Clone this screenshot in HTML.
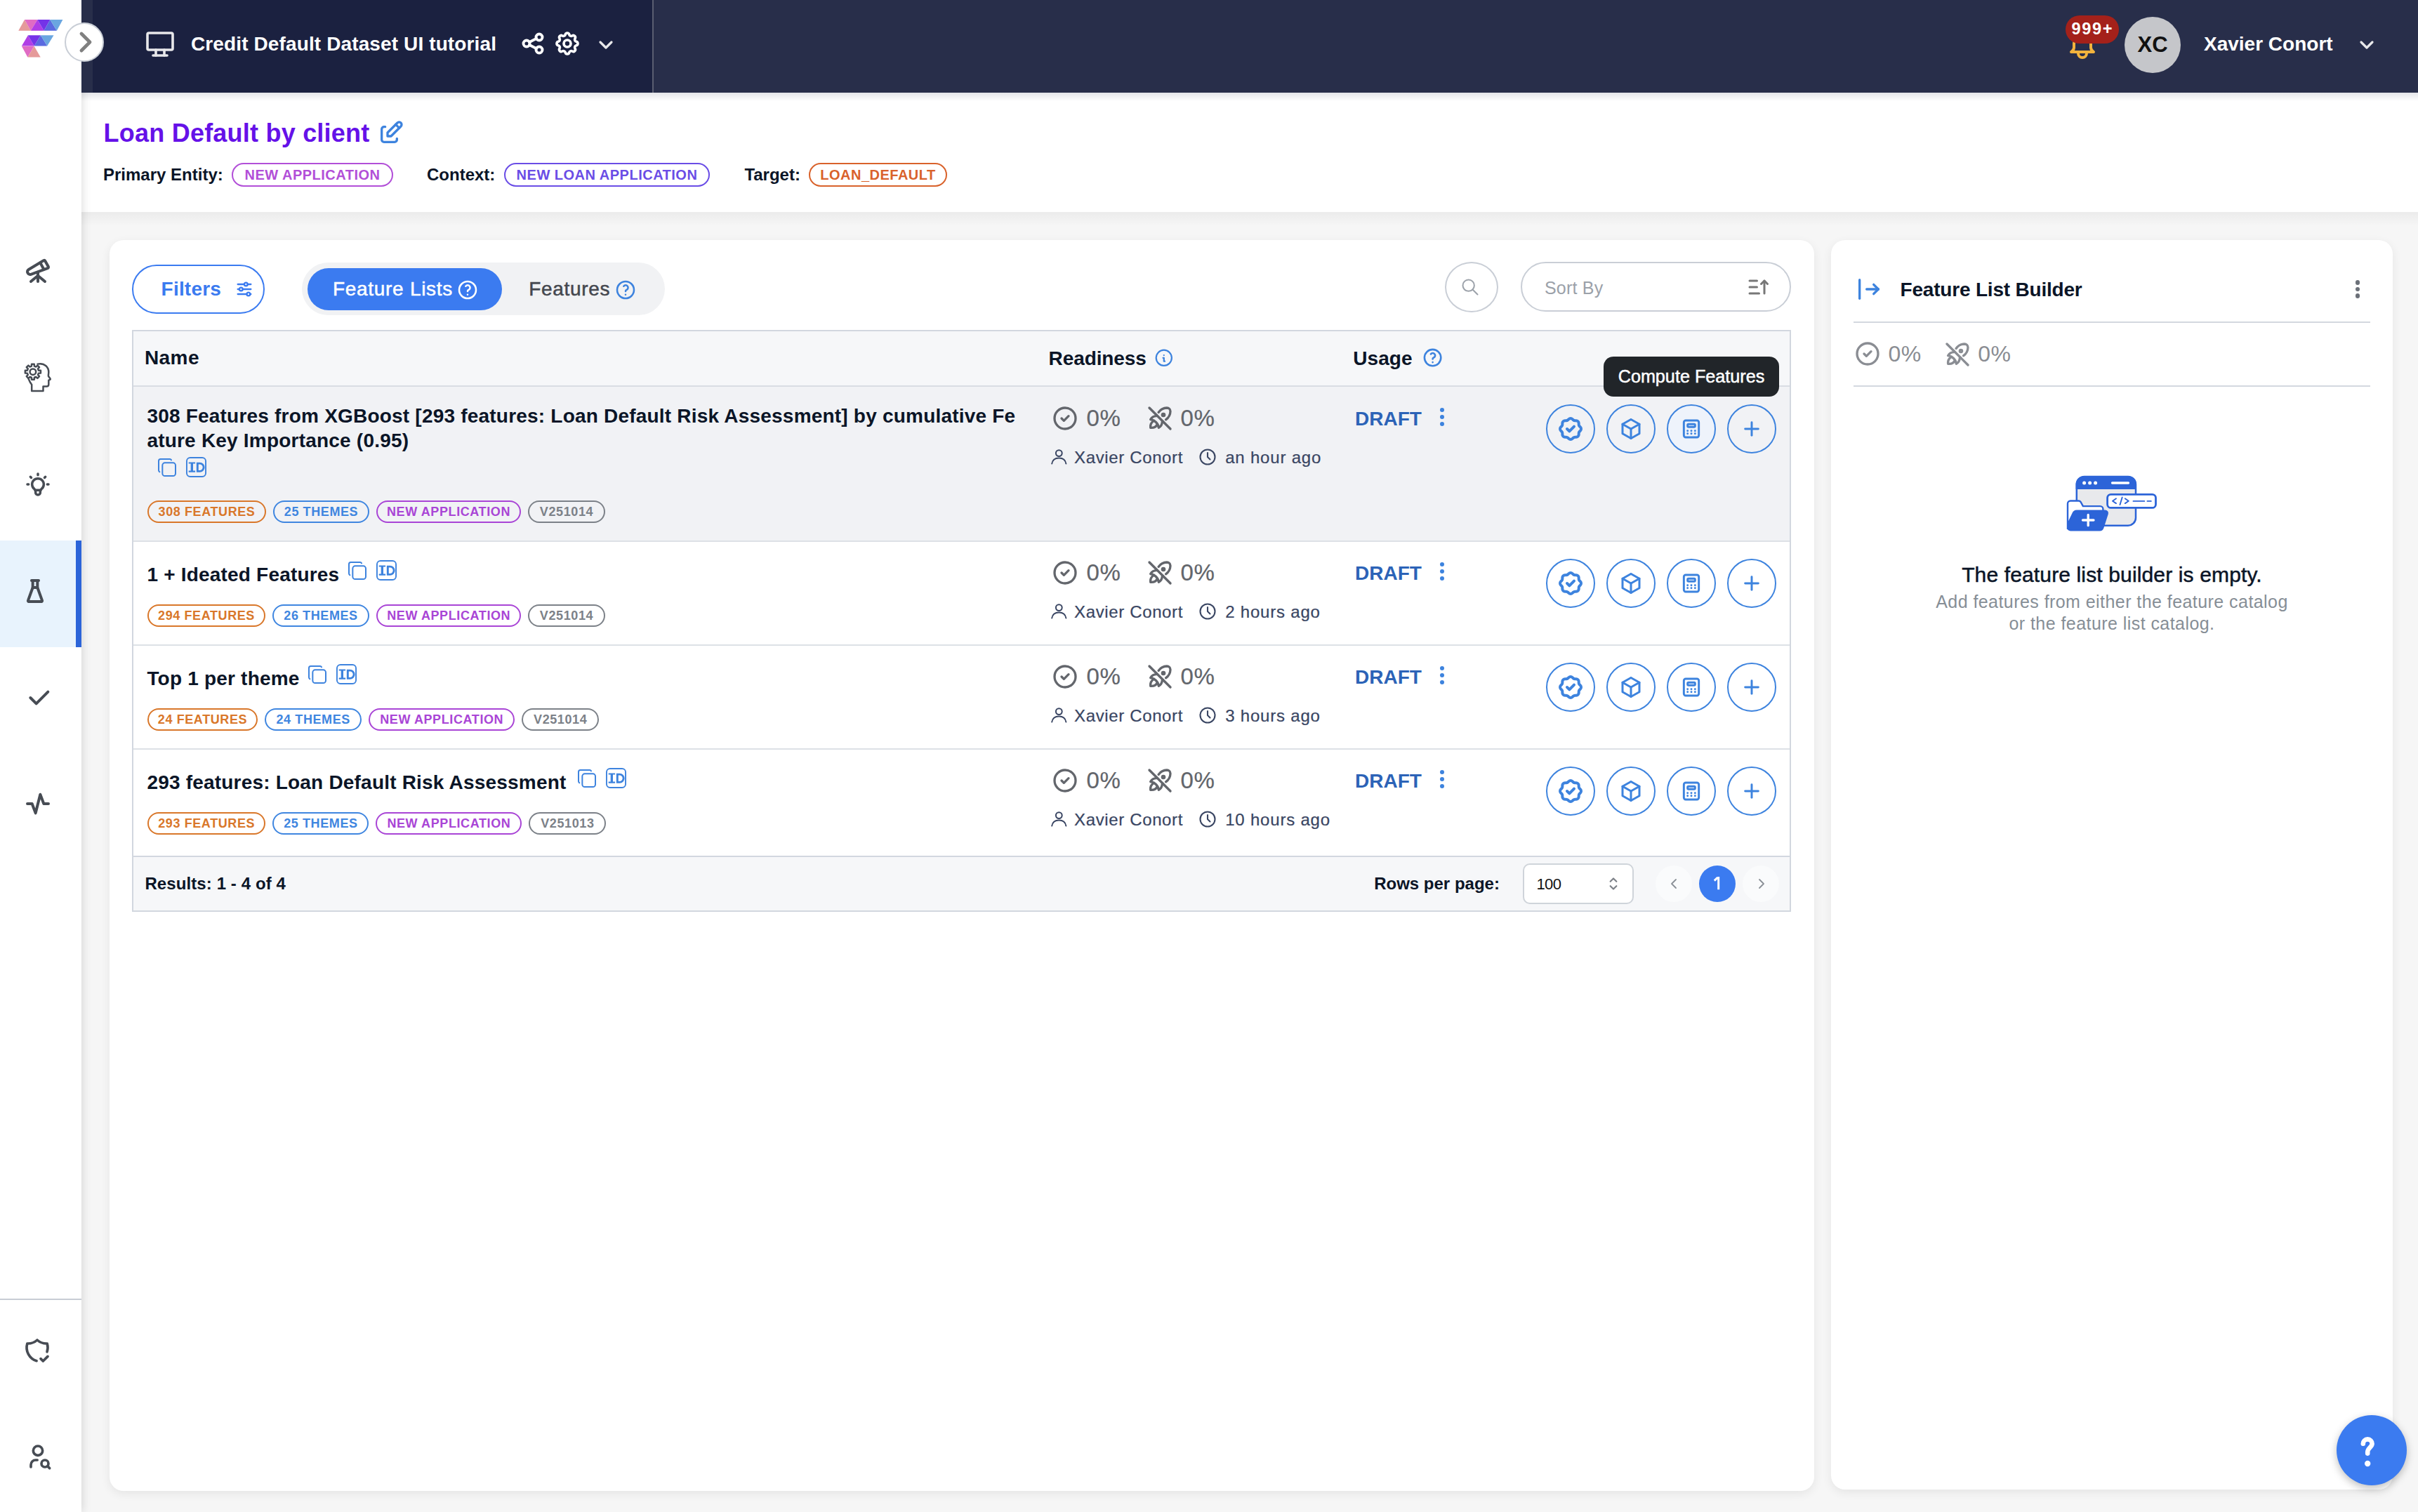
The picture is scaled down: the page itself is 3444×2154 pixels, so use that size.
<!DOCTYPE html>
<html><head><meta charset="utf-8"><title>Feature Lists</title>
<style>
html,body{margin:0;padding:0;background:#f4f4f5;overflow:hidden}
#root{zoom:2;position:relative;width:1722px;height:1077px;overflow:hidden;font-family:"Liberation Sans", sans-serif;background:#f6f6f6}
.t{position:absolute;white-space:nowrap;font-family:"Liberation Sans", sans-serif}
.m{-webkit-text-stroke:0.25px currentColor}
.s{-webkit-text-stroke:0.12px currentColor}
@media (max-width:2000px){#root{zoom:1}}
.tag{position:absolute;box-sizing:border-box;height:16px;border:1px solid;border-radius:8px;font-size:9px;font-weight:700;letter-spacing:0.3px;text-align:center;line-height:14px;font-family:"Liberation Sans", sans-serif;white-space:nowrap}
svg{overflow:visible}
</style></head><body><div id="root">
<div style="position:absolute;left:58px;top:151px;width:1664px;height:926px;background:#f6f6f6"></div><div style="position:absolute;left:58px;top:151px;width:1664px;height:10px;background:linear-gradient(rgba(0,0,0,0.045),rgba(0,0,0,0))"></div><div style="position:absolute;left:58px;top:66px;width:1664px;height:85px;background:#fff"></div><div style="position:absolute;left:58px;top:66px;width:1664px;height:6px;background:linear-gradient(#e4e5e9,#fff)"></div><div style="position:absolute;left:78px;top:171px;width:1214px;height:891px;background:#fff;border-radius:10px;box-shadow:0 2px 7px rgba(0,0,0,0.075)"></div><div style="position:absolute;left:1304px;top:171px;width:400px;height:890px;background:#fff;border-radius:10px;box-shadow:0 2px 7px rgba(0,0,0,0.075)"></div><div class="t" style="left:73.8px;top:85.76px;font-size:18px;line-height:18px;font-weight:700;color:#6511e8;letter-spacing:0.11px;">Loan Default by client</div><svg style="position:absolute;left:268.5px;top:84.3px;" width="20" height="20" viewBox="0 0 24 24" fill="none" stroke="#3d83de" stroke-width="2" stroke-linecap="round" stroke-linejoin="round"><path d="M7 7h-1a2 2 0 0 0 -2 2v9a2 2 0 0 0 2 2h9a2 2 0 0 0 2 -2v-1"/><path d="M20.385 6.585a2.1 2.1 0 0 0 -2.97 -2.97l-8.415 8.385v3h3l8.385 -8.415z"/><path d="M16 5l3 3"/></svg><div class="t" style="left:73.5px;top:118.44px;font-size:12px;line-height:12px;font-weight:700;color:#0b1527;letter-spacing:0px;">Primary Entity:</div><div class="tag" style="left:165px;top:115.8px;width:115px;height:17.4px;border-radius:9px;border-color:#b24fd8;color:#b24fd8;font-size:10px;line-height:15.4px;letter-spacing:0.25px">NEW APPLICATION</div><div class="t" style="left:304px;top:118.44px;font-size:12px;line-height:12px;font-weight:700;color:#0b1527;letter-spacing:0px;">Context:</div><div class="tag" style="left:359px;top:115.8px;width:146.5px;height:17.4px;border-radius:9px;border-color:#6a4de6;color:#6a4de6;font-size:10px;line-height:15.4px;letter-spacing:0.25px">NEW LOAN APPLICATION</div><div class="t" style="left:530.2px;top:118.44px;font-size:12px;line-height:12px;font-weight:700;color:#0b1527;letter-spacing:0px;">Target:</div><div class="tag" style="left:576px;top:115.8px;width:98.5px;height:17.4px;border-radius:9px;border-color:#d9622b;color:#d9622b;font-size:10px;line-height:15.4px;letter-spacing:0.25px">LOAN_DEFAULT</div><div style="position:absolute;left:94.2px;top:188.6px;width:92.4px;height:32.8px;border:1px solid #3b7bf0;border-radius:18px"></div><div class="t" style="left:114.8px;top:199.15px;font-size:14px;line-height:14px;font-weight:700;color:#3b7bf0;letter-spacing:0.1px;">Filters</div><svg style="position:absolute;left:167px;top:199px;" width="14" height="14" viewBox="0 0 24 24" fill="none" stroke="#3b7bf0" stroke-width="2" stroke-linecap="round" stroke-linejoin="round"><path d="M12 6a2 2 0 1 0 4 0a2 2 0 1 0 -4 0"/><path d="M4 6l8 0"/><path d="M16 6l4 0"/><path d="M6 12a2 2 0 1 0 4 0a2 2 0 1 0 -4 0"/><path d="M4 12l2 0"/><path d="M10 12l10 0"/><path d="M15 18a2 2 0 1 0 4 0a2 2 0 1 0 -4 0"/><path d="M4 18l11 0"/><path d="M19 18l1 0"/></svg><div style="position:absolute;left:215px;top:187px;width:258.5px;height:37.5px;background:#f1f2f4;border-radius:19px"></div><div style="position:absolute;left:219px;top:191px;width:138.5px;height:30px;background:#3b7bf0;border-radius:15px"></div><div class="t m" style="left:237px;top:198.85px;font-size:14px;line-height:14px;font-weight:400;color:#ffffff;letter-spacing:0.35px;">Feature Lists</div><svg style="position:absolute;left:325.2px;top:198.3px;" width="16" height="16" viewBox="0 0 24 24" fill="none" stroke="#ffffff" stroke-width="1.9" stroke-linecap="round" stroke-linejoin="round"><path d="M3 12a9 9 0 1 0 18 0a9 9 0 1 0 -18 0"/><path d="M12 17l0 .01"/><path d="M12 13.5a1.5 1.5 0 0 1 1 -1.5a2.6 2.6 0 1 0 -3 -4"/></svg><div class="t m" style="left:376.6px;top:198.85px;font-size:14px;line-height:14px;font-weight:400;color:#44474e;letter-spacing:0.35px;">Features</div><svg style="position:absolute;left:437.7px;top:198.3px;" width="16" height="16" viewBox="0 0 24 24" fill="none" stroke="#3d83de" stroke-width="1.9" stroke-linecap="round" stroke-linejoin="round"><path d="M3 12a9 9 0 1 0 18 0a9 9 0 1 0 -18 0"/><path d="M12 17l0 .01"/><path d="M12 13.5a1.5 1.5 0 0 1 1 -1.5a2.6 2.6 0 1 0 -3 -4"/></svg><div style="position:absolute;left:1029px;top:186.4px;width:36px;height:34px;border:1px solid #c9ced6;border-radius:50%"></div><svg style="position:absolute;left:1040px;top:197.4px;" width="14" height="14" viewBox="0 0 24 24" fill="none" stroke="#9ca2aa" stroke-width="1.75" stroke-linecap="round" stroke-linejoin="round"><path d="M3 10a7 7 0 1 0 14 0a7 7 0 1 0 -14 0"/><path d="M21 21l-6 -6"/></svg><div style="position:absolute;left:1083px;top:186.5px;width:190.5px;height:33.5px;border:1px solid #c9ced6;border-radius:18px"></div><div class="t" style="left:1100px;top:198.92px;font-size:12.5px;line-height:12.5px;font-weight:400;color:#9ba1a9;letter-spacing:0.1px;">Sort By</div><svg style="position:absolute;left:1242.75px;top:195.25px;" width="18" height="18" viewBox="0 0 24 24" fill="none" stroke="#777777" stroke-width="2" stroke-linecap="round" stroke-linejoin="round"><path d="M4 6l7 0"/><path d="M4 12l7 0"/><path d="M4 18l9 0"/><path d="M15 9l3 -3l3 3"/><path d="M18 6l0 12"/></svg><div style="position:absolute;left:94px;top:235px;width:1181.5px;height:1px;background:#d2d7df"></div><div style="position:absolute;left:95px;top:236px;width:1179.5px;height:38.5px;background:#f6f7f9"></div><div style="position:absolute;left:94px;top:274.5px;width:1181.5px;height:1px;background:#d9dde3"></div><div style="position:absolute;left:94px;top:235px;width:1px;height:414.5px;background:#d2d7df"></div><div style="position:absolute;left:1274.5px;top:235px;width:1px;height:414.5px;background:#d2d7df"></div><div class="t" style="left:103px;top:248.15px;font-size:14px;line-height:14px;font-weight:700;color:#0b1527;letter-spacing:0.2px;">Name</div><div class="t" style="left:746.8px;top:248.25px;font-size:14px;line-height:14px;font-weight:700;color:#0b1527;letter-spacing:-0.05px;">Readiness</div><svg style="position:absolute;left:821.6px;top:247.6px;" width="14.8" height="14.8" viewBox="0 0 24 24" fill="none" stroke="#3d83de" stroke-width="1.8" stroke-linecap="round" stroke-linejoin="round"><path d="M3 12a9 9 0 1 0 18 0a9 9 0 0 0 -18 0"/><path d="M12 9h.01"/><path d="M11 12h1v4h1"/></svg><div class="t" style="left:963.6px;top:248.25px;font-size:14px;line-height:14px;font-weight:700;color:#0b1527;letter-spacing:0.05px;">Usage</div><svg style="position:absolute;left:1012.7px;top:247.1px;" width="15.6" height="15.6" viewBox="0 0 24 24" fill="none" stroke="#3d83de" stroke-width="2" stroke-linecap="round" stroke-linejoin="round"><path d="M3 12a9 9 0 1 0 18 0a9 9 0 1 0 -18 0"/><path d="M12 17l0 .01"/><path d="M12 13.5a1.5 1.5 0 0 1 1 -1.5a2.6 2.6 0 1 0 -3 -4"/></svg><div style="position:absolute;left:95px;top:275.5px;width:1179.5px;height:109.5px;background:#f1f2f5"></div><div class="t" style="left:104.7px;top:289.65px;font-size:14px;line-height:14px;font-weight:700;color:#0b1527;letter-spacing:0.104px;">308 Features from XGBoost [293 features: Loan Default Risk Assessment] by cumulative Fe</div><div class="t" style="left:104.7px;top:307.15px;font-size:14px;line-height:14px;font-weight:700;color:#0b1527;letter-spacing:0.104px;">ature Key Importance (0.95)</div><svg style="position:absolute;left:111px;top:325px;" width="16" height="16" viewBox="0 0 24 24" fill="none" stroke="#3d83de" stroke-width="1.5" stroke-linecap="round" stroke-linejoin="round"><path d="M7 9.667a2.667 2.667 0 0 1 2.667 -2.667h8.666a2.667 2.667 0 0 1 2.667 2.667v8.666a2.667 2.667 0 0 1 -2.667 2.667h-8.666a2.667 2.667 0 0 1 -2.667 -2.667z"/><path d="M4.012 16.737a2.005 2.005 0 0 1 -1.012 -1.737v-10c0 -1.1 .9 -2 2 -2h10c.75 0 1.158 .385 1.5 1"/></svg><svg style="position:absolute;left:132.5px;top:325.5px" width="14.5" height="14.5" viewBox="0 0 29 29"><rect x="0.95" y="0.95" width="27.1" height="27.1" rx="5" fill="none" stroke="#3d83de" stroke-width="1.9"/><path d="M3.7 7.6h9.4v2h-3.1v9.8h3.1v2.3h-9.4v-2.3h3v-9.8h-3z" fill="#3d83de"/><path d="M16.3 9.1h3.2a5.1 5.1 0 0 1 0 11.3h-3.2z" fill="none" stroke="#3d83de" stroke-width="2.9"/></svg><div class="tag" style="left:105px;top:356.5px;width:84.5px;border-color:#d9772a;color:#d9772a">308 FEATURES</div><div class="tag" style="left:194.5px;top:356.5px;width:68.5px;border-color:#3f86e0;color:#3f86e0">25 THEMES</div><div class="tag" style="left:268.0px;top:356.5px;width:103px;border-color:#a945d6;color:#a945d6">NEW APPLICATION</div><div class="tag" style="left:376.0px;top:356.5px;width:55px;border-color:#7c8188;color:#7c8188">V251014</div><svg style="position:absolute;left:748.3px;top:287.8px;" width="20" height="20" viewBox="0 0 24 24" fill="none" stroke="#63666c" stroke-width="2" stroke-linecap="round" stroke-linejoin="round"><path d="M3 12a9 9 0 1 0 18 0a9 9 0 1 0 -18 0"/><path d="M9 12l2 2l4 -4"/></svg><div class="t s" style="left:773.8px;top:289.33px;font-size:16.5px;line-height:16.5px;font-weight:400;color:#63666c;letter-spacing:0.3px;">0%</div><svg style="position:absolute;left:815.8px;top:287.9px;" width="20" height="20" viewBox="0 0 24 24" fill="none" stroke="#63666c" stroke-width="2" stroke-linecap="round" stroke-linejoin="round"><path d="M9.29 9.275a9.03 9.03 0 0 0 -.29 .725a6 6 0 0 0 -5 3a8 8 0 0 1 7 7a6 6 0 0 0 3 -5c.241 -.085 .478 -.18 .708 -.283m2.428 -1.61a9 9 0 0 0 3.864 -7.107a3 3 0 0 0 -3 -3a9 9 0 0 0 -7.14 3.89"/><path d="M7 14a6 6 0 0 0 -3 6a6 6 0 0 0 6 -3"/><path d="M14 9a1 1 0 1 0 2 0a1 1 0 1 0 -2 0"/><path d="M3 3l18 18"/></svg><div class="t s" style="left:840.8px;top:289.33px;font-size:16.5px;line-height:16.5px;font-weight:400;color:#63666c;letter-spacing:0.3px;">0%</div><svg style="position:absolute;left:748.3px;top:319.9px" width="11.3" height="10.8" viewBox="0 0 22.6 21.6" fill="none" stroke="#3a4663" stroke-width="2" stroke-linecap="round"><circle cx="11.3" cy="5.6" r="4.4"/><path d="M1.2 20.6C2.2 15 6 12.6 11.3 12.6S20.4 15 21.4 20.6"/></svg><div class="t s" style="left:765px;top:319.94px;font-size:12px;line-height:12px;font-weight:400;color:#3a4663;letter-spacing:0.32px;">Xavier Conort</div><svg style="position:absolute;left:852.8px;top:318.5px;" width="14" height="14" viewBox="0 0 24 24" fill="none" stroke="#3a4663" stroke-width="1.8" stroke-linecap="round" stroke-linejoin="round"><path d="M3 12a9 9 0 1 0 18 0a9 9 0 0 0 -18 0"/><path d="M12 7v5l3 3"/></svg><div class="t s" style="left:872.6px;top:319.94px;font-size:12px;line-height:12px;font-weight:400;color:#3a4663;letter-spacing:0.4px;">an hour ago</div><div class="t" style="left:965px;top:291.65px;font-size:14px;line-height:14px;font-weight:700;color:#2c63b7;letter-spacing:0px;">DRAFT</div><div style="position:absolute;left:1025.35px;top:290.45000000000005px;width:3.3px;height:3.3px;border-radius:2px;background:#3d83de"></div><div style="position:absolute;left:1025.35px;top:295.35px;width:3.3px;height:3.3px;border-radius:2px;background:#3d83de"></div><div style="position:absolute;left:1025.35px;top:300.25px;width:3.3px;height:3.3px;border-radius:2px;background:#3d83de"></div><div style="position:absolute;left:1101.0px;top:287.75px;width:33px;height:33px;border:1px solid #3d83de;border-radius:18px;background:transparent"></div><svg style="position:absolute;left:1108.5px;top:295.25px;" width="20" height="20" viewBox="0 0 24 24" fill="none" stroke="#3d83de" stroke-width="2.4" stroke-linecap="round" stroke-linejoin="round"><path d="M5 7.2a2.2 2.2 0 0 1 2.2 -2.2h1a2.2 2.2 0 0 0 1.55 -.64l.7 -.7a2.2 2.2 0 0 1 3.12 0l.7 .7c.412 .41 .97 .64 1.55 .64h1a2.2 2.2 0 0 1 2.2 2.2v1c0 .58 .23 1.138 .64 1.55l.7 .7a2.2 2.2 0 0 1 0 3.12l-.7 .7a2.2 2.2 0 0 0 -.64 1.55v1a2.2 2.2 0 0 1 -2.2 2.2h-1a2.2 2.2 0 0 0 -1.55 .64l-.7 .7a2.2 2.2 0 0 1 -3.12 0l-.7 -.7a2.2 2.2 0 0 0 -1.55 -.64h-1a2.2 2.2 0 0 1 -2.2 -2.2v-1a2.2 2.2 0 0 0 -.64 -1.55l-.7 -.7a2.2 2.2 0 0 1 0 -3.12l.7 -.7a2.2 2.2 0 0 0 .64 -1.55v-1"/><path d="M9 12l2 2l4 -4"/></svg><div style="position:absolute;left:1144.0px;top:287.75px;width:33px;height:33px;border:1px solid #3d83de;border-radius:18px;background:transparent"></div><svg style="position:absolute;left:1152.5px;top:296.25px;" width="18" height="18" viewBox="0 0 24 24" fill="none" stroke="#3d83de" stroke-width="2" stroke-linecap="round" stroke-linejoin="round"><path d="M12 3l8 4.5l0 9l-8 4.5l-8 -4.5l0 -9l8 -4.5"/><path d="M12 12l8 -4.5"/><path d="M12 12l0 9"/><path d="M12 12l-8 -4.5"/></svg><div style="position:absolute;left:1187.0px;top:287.75px;width:33px;height:33px;border:1px solid #3d83de;border-radius:18px;background:#eef3fb"></div><svg style="position:absolute;left:1196.5px;top:297.25px;" width="16" height="16" viewBox="0 0 24 24" fill="none" stroke="#3d83de" stroke-width="2.2" stroke-linecap="round" stroke-linejoin="round"><path d="M4 5a2 2 0 0 1 2 -2h12a2 2 0 0 1 2 2v14a2 2 0 0 1 -2 2h-12a2 2 0 0 1 -2 -2z"/><path d="M8 8a1 1 0 0 1 1 -1h6a1 1 0 0 1 1 1v1a1 1 0 0 1 -1 1h-6a1 1 0 0 1 -1 -1z"/><path d="M8 14l0 .01"/><path d="M12 14l0 .01"/><path d="M16 14l0 .01"/><path d="M8 17l0 .01"/><path d="M12 17l0 .01"/><path d="M16 17l0 .01"/></svg><div style="position:absolute;left:1230.0px;top:287.75px;width:33px;height:33px;border:1px solid #3d83de;border-radius:18px;background:transparent"></div><svg style="position:absolute;left:1239.5px;top:297.25px;" width="16" height="16" viewBox="0 0 24 24" fill="none" stroke="#3d83de" stroke-width="2.2" stroke-linecap="round" stroke-linejoin="round"><path d="M12 5l0 14"/><path d="M5 12l14 0"/></svg><div style="position:absolute;left:95px;top:385.0px;width:1179.5px;height:1px;background:#dde1e6"></div><div class="t" style="left:104.7px;top:402.45px;font-size:14px;line-height:14px;font-weight:700;color:#0b1527;letter-spacing:0.1px;">1 + Ideated Features</div><svg style="position:absolute;left:246.5px;top:398.3px;" width="16" height="16" viewBox="0 0 24 24" fill="none" stroke="#3d83de" stroke-width="1.5" stroke-linecap="round" stroke-linejoin="round"><path d="M7 9.667a2.667 2.667 0 0 1 2.667 -2.667h8.666a2.667 2.667 0 0 1 2.667 2.667v8.666a2.667 2.667 0 0 1 -2.667 2.667h-8.666a2.667 2.667 0 0 1 -2.667 -2.667z"/><path d="M4.012 16.737a2.005 2.005 0 0 1 -1.012 -1.737v-10c0 -1.1 .9 -2 2 -2h10c.75 0 1.158 .385 1.5 1"/></svg><svg style="position:absolute;left:268px;top:398.8px" width="14.5" height="14.5" viewBox="0 0 29 29"><rect x="0.95" y="0.95" width="27.1" height="27.1" rx="5" fill="none" stroke="#3d83de" stroke-width="1.9"/><path d="M3.7 7.6h9.4v2h-3.1v9.8h3.1v2.3h-9.4v-2.3h3v-9.8h-3z" fill="#3d83de"/><path d="M16.3 9.1h3.2a5.1 5.1 0 0 1 0 11.3h-3.2z" fill="none" stroke="#3d83de" stroke-width="2.9"/></svg><div class="tag" style="left:105px;top:430.5px;width:84px;border-color:#d9772a;color:#d9772a">294 FEATURES</div><div class="tag" style="left:194px;top:430.5px;width:69px;border-color:#3f86e0;color:#3f86e0">26 THEMES</div><div class="tag" style="left:268px;top:430.5px;width:103.2px;border-color:#a945d6;color:#a945d6">NEW APPLICATION</div><div class="tag" style="left:376.2px;top:430.5px;width:54.6px;border-color:#7c8188;color:#7c8188">V251014</div><svg style="position:absolute;left:748.3px;top:397.8px;" width="20" height="20" viewBox="0 0 24 24" fill="none" stroke="#63666c" stroke-width="2" stroke-linecap="round" stroke-linejoin="round"><path d="M3 12a9 9 0 1 0 18 0a9 9 0 1 0 -18 0"/><path d="M9 12l2 2l4 -4"/></svg><div class="t s" style="left:773.8px;top:399.33px;font-size:16.5px;line-height:16.5px;font-weight:400;color:#63666c;letter-spacing:0.3px;">0%</div><svg style="position:absolute;left:815.8px;top:397.9px;" width="20" height="20" viewBox="0 0 24 24" fill="none" stroke="#63666c" stroke-width="2" stroke-linecap="round" stroke-linejoin="round"><path d="M9.29 9.275a9.03 9.03 0 0 0 -.29 .725a6 6 0 0 0 -5 3a8 8 0 0 1 7 7a6 6 0 0 0 3 -5c.241 -.085 .478 -.18 .708 -.283m2.428 -1.61a9 9 0 0 0 3.864 -7.107a3 3 0 0 0 -3 -3a9 9 0 0 0 -7.14 3.89"/><path d="M7 14a6 6 0 0 0 -3 6a6 6 0 0 0 6 -3"/><path d="M14 9a1 1 0 1 0 2 0a1 1 0 1 0 -2 0"/><path d="M3 3l18 18"/></svg><div class="t s" style="left:840.8px;top:399.33px;font-size:16.5px;line-height:16.5px;font-weight:400;color:#63666c;letter-spacing:0.3px;">0%</div><svg style="position:absolute;left:748.3px;top:429.9px" width="11.3" height="10.8" viewBox="0 0 22.6 21.6" fill="none" stroke="#3a4663" stroke-width="2" stroke-linecap="round"><circle cx="11.3" cy="5.6" r="4.4"/><path d="M1.2 20.6C2.2 15 6 12.6 11.3 12.6S20.4 15 21.4 20.6"/></svg><div class="t s" style="left:765px;top:429.94px;font-size:12px;line-height:12px;font-weight:400;color:#3a4663;letter-spacing:0.32px;">Xavier Conort</div><svg style="position:absolute;left:852.8px;top:428.5px;" width="14" height="14" viewBox="0 0 24 24" fill="none" stroke="#3a4663" stroke-width="1.8" stroke-linecap="round" stroke-linejoin="round"><path d="M3 12a9 9 0 1 0 18 0a9 9 0 0 0 -18 0"/><path d="M12 7v5l3 3"/></svg><div class="t s" style="left:872.6px;top:429.94px;font-size:12px;line-height:12px;font-weight:400;color:#3a4663;letter-spacing:0.4px;">2 hours ago</div><div class="t" style="left:965px;top:401.65px;font-size:14px;line-height:14px;font-weight:700;color:#2c63b7;letter-spacing:0px;">DRAFT</div><div style="position:absolute;left:1025.35px;top:400.45000000000005px;width:3.3px;height:3.3px;border-radius:2px;background:#3d83de"></div><div style="position:absolute;left:1025.35px;top:405.35px;width:3.3px;height:3.3px;border-radius:2px;background:#3d83de"></div><div style="position:absolute;left:1025.35px;top:410.25px;width:3.3px;height:3.3px;border-radius:2px;background:#3d83de"></div><div style="position:absolute;left:1101.0px;top:397.75px;width:33px;height:33px;border:1px solid #3d83de;border-radius:18px;background:transparent"></div><svg style="position:absolute;left:1108.5px;top:405.25px;" width="20" height="20" viewBox="0 0 24 24" fill="none" stroke="#3d83de" stroke-width="2.4" stroke-linecap="round" stroke-linejoin="round"><path d="M5 7.2a2.2 2.2 0 0 1 2.2 -2.2h1a2.2 2.2 0 0 0 1.55 -.64l.7 -.7a2.2 2.2 0 0 1 3.12 0l.7 .7c.412 .41 .97 .64 1.55 .64h1a2.2 2.2 0 0 1 2.2 2.2v1c0 .58 .23 1.138 .64 1.55l.7 .7a2.2 2.2 0 0 1 0 3.12l-.7 .7a2.2 2.2 0 0 0 -.64 1.55v1a2.2 2.2 0 0 1 -2.2 2.2h-1a2.2 2.2 0 0 0 -1.55 .64l-.7 .7a2.2 2.2 0 0 1 -3.12 0l-.7 -.7a2.2 2.2 0 0 0 -1.55 -.64h-1a2.2 2.2 0 0 1 -2.2 -2.2v-1a2.2 2.2 0 0 0 -.64 -1.55l-.7 -.7a2.2 2.2 0 0 1 0 -3.12l.7 -.7a2.2 2.2 0 0 0 .64 -1.55v-1"/><path d="M9 12l2 2l4 -4"/></svg><div style="position:absolute;left:1144.0px;top:397.75px;width:33px;height:33px;border:1px solid #3d83de;border-radius:18px;background:transparent"></div><svg style="position:absolute;left:1152.5px;top:406.25px;" width="18" height="18" viewBox="0 0 24 24" fill="none" stroke="#3d83de" stroke-width="2" stroke-linecap="round" stroke-linejoin="round"><path d="M12 3l8 4.5l0 9l-8 4.5l-8 -4.5l0 -9l8 -4.5"/><path d="M12 12l8 -4.5"/><path d="M12 12l0 9"/><path d="M12 12l-8 -4.5"/></svg><div style="position:absolute;left:1187.0px;top:397.75px;width:33px;height:33px;border:1px solid #3d83de;border-radius:18px;background:transparent"></div><svg style="position:absolute;left:1196.5px;top:407.25px;" width="16" height="16" viewBox="0 0 24 24" fill="none" stroke="#3d83de" stroke-width="2.2" stroke-linecap="round" stroke-linejoin="round"><path d="M4 5a2 2 0 0 1 2 -2h12a2 2 0 0 1 2 2v14a2 2 0 0 1 -2 2h-12a2 2 0 0 1 -2 -2z"/><path d="M8 8a1 1 0 0 1 1 -1h6a1 1 0 0 1 1 1v1a1 1 0 0 1 -1 1h-6a1 1 0 0 1 -1 -1z"/><path d="M8 14l0 .01"/><path d="M12 14l0 .01"/><path d="M16 14l0 .01"/><path d="M8 17l0 .01"/><path d="M12 17l0 .01"/><path d="M16 17l0 .01"/></svg><div style="position:absolute;left:1230.0px;top:397.75px;width:33px;height:33px;border:1px solid #3d83de;border-radius:18px;background:transparent"></div><svg style="position:absolute;left:1239.5px;top:407.25px;" width="16" height="16" viewBox="0 0 24 24" fill="none" stroke="#3d83de" stroke-width="2.2" stroke-linecap="round" stroke-linejoin="round"><path d="M12 5l0 14"/><path d="M5 12l14 0"/></svg><div style="position:absolute;left:95px;top:459.0px;width:1179.5px;height:1px;background:#dde1e6"></div><div class="t" style="left:104.7px;top:476.45px;font-size:14px;line-height:14px;font-weight:700;color:#0b1527;letter-spacing:0.1px;">Top 1 per theme</div><svg style="position:absolute;left:218.0px;top:472.3px;" width="16" height="16" viewBox="0 0 24 24" fill="none" stroke="#3d83de" stroke-width="1.5" stroke-linecap="round" stroke-linejoin="round"><path d="M7 9.667a2.667 2.667 0 0 1 2.667 -2.667h8.666a2.667 2.667 0 0 1 2.667 2.667v8.666a2.667 2.667 0 0 1 -2.667 2.667h-8.666a2.667 2.667 0 0 1 -2.667 -2.667z"/><path d="M4.012 16.737a2.005 2.005 0 0 1 -1.012 -1.737v-10c0 -1.1 .9 -2 2 -2h10c.75 0 1.158 .385 1.5 1"/></svg><svg style="position:absolute;left:239.5px;top:472.8px" width="14.5" height="14.5" viewBox="0 0 29 29"><rect x="0.95" y="0.95" width="27.1" height="27.1" rx="5" fill="none" stroke="#3d83de" stroke-width="1.9"/><path d="M3.7 7.6h9.4v2h-3.1v9.8h3.1v2.3h-9.4v-2.3h3v-9.8h-3z" fill="#3d83de"/><path d="M16.3 9.1h3.2a5.1 5.1 0 0 1 0 11.3h-3.2z" fill="none" stroke="#3d83de" stroke-width="2.9"/></svg><div class="tag" style="left:105px;top:504.5px;width:78.5px;border-color:#d9772a;color:#d9772a">24 FEATURES</div><div class="tag" style="left:188.5px;top:504.5px;width:69.2px;border-color:#3f86e0;color:#3f86e0">24 THEMES</div><div class="tag" style="left:262.7px;top:504.5px;width:103.8px;border-color:#a945d6;color:#a945d6">NEW APPLICATION</div><div class="tag" style="left:371.5px;top:504.5px;width:55.2px;border-color:#7c8188;color:#7c8188">V251014</div><svg style="position:absolute;left:748.3px;top:471.8px;" width="20" height="20" viewBox="0 0 24 24" fill="none" stroke="#63666c" stroke-width="2" stroke-linecap="round" stroke-linejoin="round"><path d="M3 12a9 9 0 1 0 18 0a9 9 0 1 0 -18 0"/><path d="M9 12l2 2l4 -4"/></svg><div class="t s" style="left:773.8px;top:473.33px;font-size:16.5px;line-height:16.5px;font-weight:400;color:#63666c;letter-spacing:0.3px;">0%</div><svg style="position:absolute;left:815.8px;top:471.9px;" width="20" height="20" viewBox="0 0 24 24" fill="none" stroke="#63666c" stroke-width="2" stroke-linecap="round" stroke-linejoin="round"><path d="M9.29 9.275a9.03 9.03 0 0 0 -.29 .725a6 6 0 0 0 -5 3a8 8 0 0 1 7 7a6 6 0 0 0 3 -5c.241 -.085 .478 -.18 .708 -.283m2.428 -1.61a9 9 0 0 0 3.864 -7.107a3 3 0 0 0 -3 -3a9 9 0 0 0 -7.14 3.89"/><path d="M7 14a6 6 0 0 0 -3 6a6 6 0 0 0 6 -3"/><path d="M14 9a1 1 0 1 0 2 0a1 1 0 1 0 -2 0"/><path d="M3 3l18 18"/></svg><div class="t s" style="left:840.8px;top:473.33px;font-size:16.5px;line-height:16.5px;font-weight:400;color:#63666c;letter-spacing:0.3px;">0%</div><svg style="position:absolute;left:748.3px;top:503.9px" width="11.3" height="10.8" viewBox="0 0 22.6 21.6" fill="none" stroke="#3a4663" stroke-width="2" stroke-linecap="round"><circle cx="11.3" cy="5.6" r="4.4"/><path d="M1.2 20.6C2.2 15 6 12.6 11.3 12.6S20.4 15 21.4 20.6"/></svg><div class="t s" style="left:765px;top:503.94px;font-size:12px;line-height:12px;font-weight:400;color:#3a4663;letter-spacing:0.32px;">Xavier Conort</div><svg style="position:absolute;left:852.8px;top:502.5px;" width="14" height="14" viewBox="0 0 24 24" fill="none" stroke="#3a4663" stroke-width="1.8" stroke-linecap="round" stroke-linejoin="round"><path d="M3 12a9 9 0 1 0 18 0a9 9 0 0 0 -18 0"/><path d="M12 7v5l3 3"/></svg><div class="t s" style="left:872.6px;top:503.94px;font-size:12px;line-height:12px;font-weight:400;color:#3a4663;letter-spacing:0.4px;">3 hours ago</div><div class="t" style="left:965px;top:475.65px;font-size:14px;line-height:14px;font-weight:700;color:#2c63b7;letter-spacing:0px;">DRAFT</div><div style="position:absolute;left:1025.35px;top:474.45000000000005px;width:3.3px;height:3.3px;border-radius:2px;background:#3d83de"></div><div style="position:absolute;left:1025.35px;top:479.35px;width:3.3px;height:3.3px;border-radius:2px;background:#3d83de"></div><div style="position:absolute;left:1025.35px;top:484.25px;width:3.3px;height:3.3px;border-radius:2px;background:#3d83de"></div><div style="position:absolute;left:1101.0px;top:471.75px;width:33px;height:33px;border:1px solid #3d83de;border-radius:18px;background:transparent"></div><svg style="position:absolute;left:1108.5px;top:479.25px;" width="20" height="20" viewBox="0 0 24 24" fill="none" stroke="#3d83de" stroke-width="2.4" stroke-linecap="round" stroke-linejoin="round"><path d="M5 7.2a2.2 2.2 0 0 1 2.2 -2.2h1a2.2 2.2 0 0 0 1.55 -.64l.7 -.7a2.2 2.2 0 0 1 3.12 0l.7 .7c.412 .41 .97 .64 1.55 .64h1a2.2 2.2 0 0 1 2.2 2.2v1c0 .58 .23 1.138 .64 1.55l.7 .7a2.2 2.2 0 0 1 0 3.12l-.7 .7a2.2 2.2 0 0 0 -.64 1.55v1a2.2 2.2 0 0 1 -2.2 2.2h-1a2.2 2.2 0 0 0 -1.55 .64l-.7 .7a2.2 2.2 0 0 1 -3.12 0l-.7 -.7a2.2 2.2 0 0 0 -1.55 -.64h-1a2.2 2.2 0 0 1 -2.2 -2.2v-1a2.2 2.2 0 0 0 -.64 -1.55l-.7 -.7a2.2 2.2 0 0 1 0 -3.12l.7 -.7a2.2 2.2 0 0 0 .64 -1.55v-1"/><path d="M9 12l2 2l4 -4"/></svg><div style="position:absolute;left:1144.0px;top:471.75px;width:33px;height:33px;border:1px solid #3d83de;border-radius:18px;background:transparent"></div><svg style="position:absolute;left:1152.5px;top:480.25px;" width="18" height="18" viewBox="0 0 24 24" fill="none" stroke="#3d83de" stroke-width="2" stroke-linecap="round" stroke-linejoin="round"><path d="M12 3l8 4.5l0 9l-8 4.5l-8 -4.5l0 -9l8 -4.5"/><path d="M12 12l8 -4.5"/><path d="M12 12l0 9"/><path d="M12 12l-8 -4.5"/></svg><div style="position:absolute;left:1187.0px;top:471.75px;width:33px;height:33px;border:1px solid #3d83de;border-radius:18px;background:transparent"></div><svg style="position:absolute;left:1196.5px;top:481.25px;" width="16" height="16" viewBox="0 0 24 24" fill="none" stroke="#3d83de" stroke-width="2.2" stroke-linecap="round" stroke-linejoin="round"><path d="M4 5a2 2 0 0 1 2 -2h12a2 2 0 0 1 2 2v14a2 2 0 0 1 -2 2h-12a2 2 0 0 1 -2 -2z"/><path d="M8 8a1 1 0 0 1 1 -1h6a1 1 0 0 1 1 1v1a1 1 0 0 1 -1 1h-6a1 1 0 0 1 -1 -1z"/><path d="M8 14l0 .01"/><path d="M12 14l0 .01"/><path d="M16 14l0 .01"/><path d="M8 17l0 .01"/><path d="M12 17l0 .01"/><path d="M16 17l0 .01"/></svg><div style="position:absolute;left:1230.0px;top:471.75px;width:33px;height:33px;border:1px solid #3d83de;border-radius:18px;background:transparent"></div><svg style="position:absolute;left:1239.5px;top:481.25px;" width="16" height="16" viewBox="0 0 24 24" fill="none" stroke="#3d83de" stroke-width="2.2" stroke-linecap="round" stroke-linejoin="round"><path d="M12 5l0 14"/><path d="M5 12l14 0"/></svg><div style="position:absolute;left:95px;top:533.0px;width:1179.5px;height:1px;background:#dde1e6"></div><div class="t" style="left:104.7px;top:550.45px;font-size:14px;line-height:14px;font-weight:700;color:#0b1527;letter-spacing:0.1px;">293 features: Loan Default Risk Assessment</div><svg style="position:absolute;left:410.0px;top:546.3px;" width="16" height="16" viewBox="0 0 24 24" fill="none" stroke="#3d83de" stroke-width="1.5" stroke-linecap="round" stroke-linejoin="round"><path d="M7 9.667a2.667 2.667 0 0 1 2.667 -2.667h8.666a2.667 2.667 0 0 1 2.667 2.667v8.666a2.667 2.667 0 0 1 -2.667 2.667h-8.666a2.667 2.667 0 0 1 -2.667 -2.667z"/><path d="M4.012 16.737a2.005 2.005 0 0 1 -1.012 -1.737v-10c0 -1.1 .9 -2 2 -2h10c.75 0 1.158 .385 1.5 1"/></svg><svg style="position:absolute;left:431.5px;top:546.8px" width="14.5" height="14.5" viewBox="0 0 29 29"><rect x="0.95" y="0.95" width="27.1" height="27.1" rx="5" fill="none" stroke="#3d83de" stroke-width="1.9"/><path d="M3.7 7.6h9.4v2h-3.1v9.8h3.1v2.3h-9.4v-2.3h3v-9.8h-3z" fill="#3d83de"/><path d="M16.3 9.1h3.2a5.1 5.1 0 0 1 0 11.3h-3.2z" fill="none" stroke="#3d83de" stroke-width="2.9"/></svg><div class="tag" style="left:105px;top:578.5px;width:84.2px;border-color:#d9772a;color:#d9772a">293 FEATURES</div><div class="tag" style="left:194.2px;top:578.5px;width:68.5px;border-color:#3f86e0;color:#3f86e0">25 THEMES</div><div class="tag" style="left:267.7px;top:578.5px;width:104px;border-color:#a945d6;color:#a945d6">NEW APPLICATION</div><div class="tag" style="left:376.7px;top:578.5px;width:55px;border-color:#7c8188;color:#7c8188">V251013</div><svg style="position:absolute;left:748.3px;top:545.8px;" width="20" height="20" viewBox="0 0 24 24" fill="none" stroke="#63666c" stroke-width="2" stroke-linecap="round" stroke-linejoin="round"><path d="M3 12a9 9 0 1 0 18 0a9 9 0 1 0 -18 0"/><path d="M9 12l2 2l4 -4"/></svg><div class="t s" style="left:773.8px;top:547.33px;font-size:16.5px;line-height:16.5px;font-weight:400;color:#63666c;letter-spacing:0.3px;">0%</div><svg style="position:absolute;left:815.8px;top:545.9px;" width="20" height="20" viewBox="0 0 24 24" fill="none" stroke="#63666c" stroke-width="2" stroke-linecap="round" stroke-linejoin="round"><path d="M9.29 9.275a9.03 9.03 0 0 0 -.29 .725a6 6 0 0 0 -5 3a8 8 0 0 1 7 7a6 6 0 0 0 3 -5c.241 -.085 .478 -.18 .708 -.283m2.428 -1.61a9 9 0 0 0 3.864 -7.107a3 3 0 0 0 -3 -3a9 9 0 0 0 -7.14 3.89"/><path d="M7 14a6 6 0 0 0 -3 6a6 6 0 0 0 6 -3"/><path d="M14 9a1 1 0 1 0 2 0a1 1 0 1 0 -2 0"/><path d="M3 3l18 18"/></svg><div class="t s" style="left:840.8px;top:547.33px;font-size:16.5px;line-height:16.5px;font-weight:400;color:#63666c;letter-spacing:0.3px;">0%</div><svg style="position:absolute;left:748.3px;top:577.9px" width="11.3" height="10.8" viewBox="0 0 22.6 21.6" fill="none" stroke="#3a4663" stroke-width="2" stroke-linecap="round"><circle cx="11.3" cy="5.6" r="4.4"/><path d="M1.2 20.6C2.2 15 6 12.6 11.3 12.6S20.4 15 21.4 20.6"/></svg><div class="t s" style="left:765px;top:577.94px;font-size:12px;line-height:12px;font-weight:400;color:#3a4663;letter-spacing:0.32px;">Xavier Conort</div><svg style="position:absolute;left:852.8px;top:576.5px;" width="14" height="14" viewBox="0 0 24 24" fill="none" stroke="#3a4663" stroke-width="1.8" stroke-linecap="round" stroke-linejoin="round"><path d="M3 12a9 9 0 1 0 18 0a9 9 0 0 0 -18 0"/><path d="M12 7v5l3 3"/></svg><div class="t s" style="left:872.6px;top:577.94px;font-size:12px;line-height:12px;font-weight:400;color:#3a4663;letter-spacing:0.4px;">10 hours ago</div><div class="t" style="left:965px;top:549.65px;font-size:14px;line-height:14px;font-weight:700;color:#2c63b7;letter-spacing:0px;">DRAFT</div><div style="position:absolute;left:1025.35px;top:548.45px;width:3.3px;height:3.3px;border-radius:2px;background:#3d83de"></div><div style="position:absolute;left:1025.35px;top:553.35px;width:3.3px;height:3.3px;border-radius:2px;background:#3d83de"></div><div style="position:absolute;left:1025.35px;top:558.25px;width:3.3px;height:3.3px;border-radius:2px;background:#3d83de"></div><div style="position:absolute;left:1101.0px;top:545.75px;width:33px;height:33px;border:1px solid #3d83de;border-radius:18px;background:transparent"></div><svg style="position:absolute;left:1108.5px;top:553.25px;" width="20" height="20" viewBox="0 0 24 24" fill="none" stroke="#3d83de" stroke-width="2.4" stroke-linecap="round" stroke-linejoin="round"><path d="M5 7.2a2.2 2.2 0 0 1 2.2 -2.2h1a2.2 2.2 0 0 0 1.55 -.64l.7 -.7a2.2 2.2 0 0 1 3.12 0l.7 .7c.412 .41 .97 .64 1.55 .64h1a2.2 2.2 0 0 1 2.2 2.2v1c0 .58 .23 1.138 .64 1.55l.7 .7a2.2 2.2 0 0 1 0 3.12l-.7 .7a2.2 2.2 0 0 0 -.64 1.55v1a2.2 2.2 0 0 1 -2.2 2.2h-1a2.2 2.2 0 0 0 -1.55 .64l-.7 .7a2.2 2.2 0 0 1 -3.12 0l-.7 -.7a2.2 2.2 0 0 0 -1.55 -.64h-1a2.2 2.2 0 0 1 -2.2 -2.2v-1a2.2 2.2 0 0 0 -.64 -1.55l-.7 -.7a2.2 2.2 0 0 1 0 -3.12l.7 -.7a2.2 2.2 0 0 0 .64 -1.55v-1"/><path d="M9 12l2 2l4 -4"/></svg><div style="position:absolute;left:1144.0px;top:545.75px;width:33px;height:33px;border:1px solid #3d83de;border-radius:18px;background:transparent"></div><svg style="position:absolute;left:1152.5px;top:554.25px;" width="18" height="18" viewBox="0 0 24 24" fill="none" stroke="#3d83de" stroke-width="2" stroke-linecap="round" stroke-linejoin="round"><path d="M12 3l8 4.5l0 9l-8 4.5l-8 -4.5l0 -9l8 -4.5"/><path d="M12 12l8 -4.5"/><path d="M12 12l0 9"/><path d="M12 12l-8 -4.5"/></svg><div style="position:absolute;left:1187.0px;top:545.75px;width:33px;height:33px;border:1px solid #3d83de;border-radius:18px;background:transparent"></div><svg style="position:absolute;left:1196.5px;top:555.25px;" width="16" height="16" viewBox="0 0 24 24" fill="none" stroke="#3d83de" stroke-width="2.2" stroke-linecap="round" stroke-linejoin="round"><path d="M4 5a2 2 0 0 1 2 -2h12a2 2 0 0 1 2 2v14a2 2 0 0 1 -2 2h-12a2 2 0 0 1 -2 -2z"/><path d="M8 8a1 1 0 0 1 1 -1h6a1 1 0 0 1 1 1v1a1 1 0 0 1 -1 1h-6a1 1 0 0 1 -1 -1z"/><path d="M8 14l0 .01"/><path d="M12 14l0 .01"/><path d="M16 14l0 .01"/><path d="M8 17l0 .01"/><path d="M12 17l0 .01"/><path d="M16 17l0 .01"/></svg><div style="position:absolute;left:1230.0px;top:545.75px;width:33px;height:33px;border:1px solid #3d83de;border-radius:18px;background:transparent"></div><svg style="position:absolute;left:1239.5px;top:555.25px;" width="16" height="16" viewBox="0 0 24 24" fill="none" stroke="#3d83de" stroke-width="2.2" stroke-linecap="round" stroke-linejoin="round"><path d="M12 5l0 14"/><path d="M5 12l14 0"/></svg><div style="position:absolute;left:95px;top:610px;width:1179.5px;height:38.5px;background:#f6f7f9"></div><div style="position:absolute;left:94px;top:609.5px;width:1181.5px;height:1px;background:#d2d7df"></div><div style="position:absolute;left:94px;top:648.5px;width:1181.5px;height:1px;background:#d2d7df"></div><div class="t" style="left:103.2px;top:623.34px;font-size:12px;line-height:12px;font-weight:700;color:#0b1527;letter-spacing:0.05px;">Results: 1 - 4 of 4</div><div class="t" style="left:978.6px;top:623.59px;font-size:12px;line-height:12px;font-weight:700;color:#0b1527;letter-spacing:0px;">Rows per page:</div><div style="position:absolute;left:1084.5px;top:615px;width:77px;height:27px;border:1px solid #cfd4da;border-radius:5px;background:#fff"></div><div class="t" style="left:1094.2px;top:624.44px;font-size:11px;line-height:11px;font-weight:400;color:#111111;letter-spacing:-0.3px;">100</div><svg style="position:absolute;left:1142.5px;top:623px;" width="13" height="13" viewBox="0 0 24 24" fill="none" stroke="#7c8087" stroke-width="2" stroke-linecap="round" stroke-linejoin="round"><path d="M8 9l4 -4l4 4"/><path d="M16 15l-4 4l-4 -4"/></svg><div style="position:absolute;left:1179px;top:616.5px;width:26px;height:26px;background:#fafbfc;border-radius:13px"></div><svg style="position:absolute;left:1186px;top:623.5px;" width="12" height="12" viewBox="0 0 24 24" fill="none" stroke="#8b9097" stroke-width="1.8" stroke-linecap="round" stroke-linejoin="round"><path d="M15 6l-6 6l6 6"/></svg><div style="position:absolute;left:1210px;top:616.5px;width:26px;height:26px;background:#3b7bf0;border-radius:13px"></div><svg style="position:absolute;left:1218px;top:623px" width="8" height="12" viewBox="0 0 8 12"><path d="M2.9 4.3L5.2 2.1M5.85 1.5V10.6" stroke="#fff" stroke-width="1.5" fill="none" stroke-linecap="butt"/></svg><div style="position:absolute;left:1240.75px;top:616.5px;width:26px;height:26px;background:#fafbfc;border-radius:13px"></div><svg style="position:absolute;left:1248.3px;top:623.5px;" width="12" height="12" viewBox="0 0 24 24" fill="none" stroke="#8b9097" stroke-width="1.8" stroke-linecap="round" stroke-linejoin="round"><path d="M9 6l6 6l-6 6"/></svg><div style="position:absolute;left:1142px;top:254px;width:125px;height:28.5px;border-radius:7px;background:#212529;z-index:3"></div><div class="t m" style="left:904.5px;width:600px;text-align:center;top:262.03px;font-size:12.6px;line-height:12.6px;font-weight:400;color:#ffffff;letter-spacing:0px;z-index:3">Compute Features</div><svg style="position:absolute;left:1321px;top:195.9px;" width="20" height="20" viewBox="0 0 24 24" fill="none" stroke="#3d83de" stroke-width="2" stroke-linecap="round" stroke-linejoin="round"><path d="M20 12l-10 0"/><path d="M20 12l-4 4"/><path d="M20 12l-4 -4"/><path d="M4 4l0 16"/></svg><div class="t" style="left:1353.3px;top:199.65px;font-size:14px;line-height:14px;font-weight:700;color:#0b1527;letter-spacing:-0.1px;">Feature List Builder</div><div style="position:absolute;left:1677.4px;top:199.70000000000002px;width:3.2px;height:3.2px;border-radius:2px;background:#6b7078"></div><div style="position:absolute;left:1677.4px;top:204.4px;width:3.2px;height:3.2px;border-radius:2px;background:#6b7078"></div><div style="position:absolute;left:1677.4px;top:209.1px;width:3.2px;height:3.2px;border-radius:2px;background:#6b7078"></div><div style="position:absolute;left:1320px;top:229px;width:368px;height:1px;background:#d3d8df"></div><svg style="position:absolute;left:1320.1px;top:241.8px;" width="20" height="20" viewBox="0 0 24 24" fill="none" stroke="#8a8d93" stroke-width="2" stroke-linecap="round" stroke-linejoin="round"><path d="M3 12a9 9 0 1 0 18 0a9 9 0 1 0 -18 0"/><path d="M9 12l2 2l4 -4"/></svg><div class="t" style="left:1344.7px;top:243.80px;font-size:16px;line-height:16px;font-weight:400;color:#8a8d93;letter-spacing:0.28px;">0%</div><svg style="position:absolute;left:1383.8px;top:242.3px;" width="20" height="20" viewBox="0 0 24 24" fill="none" stroke="#8a8d93" stroke-width="2" stroke-linecap="round" stroke-linejoin="round"><path d="M9.29 9.275a9.03 9.03 0 0 0 -.29 .725a6 6 0 0 0 -5 3a8 8 0 0 1 7 7a6 6 0 0 0 3 -5c.241 -.085 .478 -.18 .708 -.283m2.428 -1.61a9 9 0 0 0 3.864 -7.107a3 3 0 0 0 -3 -3a9 9 0 0 0 -7.14 3.89"/><path d="M7 14a6 6 0 0 0 -3 6a6 6 0 0 0 6 -3"/><path d="M14 9a1 1 0 1 0 2 0a1 1 0 1 0 -2 0"/><path d="M3 3l18 18"/></svg><div class="t" style="left:1408.6px;top:243.80px;font-size:16px;line-height:16px;font-weight:400;color:#8a8d93;letter-spacing:0.28px;">0%</div><div style="position:absolute;left:1320px;top:274.5px;width:368px;height:1px;background:#d3d8df"></div><svg style="position:absolute;left:1465px;top:330px" width="80" height="55" viewBox="0 0 160 110">
<rect x="27.8" y="19" width="84.2" height="69.7" rx="11" fill="#e8e9ec" stroke="#2c64d8" stroke-width="2.5"/>
<path d="M26.6 37.1V30a12 12 0 0 1 12 -12H101a12 12 0 0 1 12 12v7.1z" fill="#2c64d8"/>
<circle cx="38.6" cy="28" r="2.5" fill="#fff"/><circle cx="46.6" cy="28" r="2.5" fill="#fff"/><circle cx="54.6" cy="28" r="2.5" fill="#fff"/>
<path d="M78.5 28H101.5" stroke="#fff" stroke-width="3.3" stroke-linecap="round"/>
<rect x="71.6" y="44.3" width="68.9" height="19.1" rx="5" fill="#fff" stroke="#2c64d8" stroke-width="2.8"/>
<path d="M84 50.2l-5 3.5l5 3.4M89.5 59l3.2-10.6M96.8 50.2l5 3.5l-5 3.4" stroke="#2c64d8" stroke-width="1.9" fill="none" stroke-linecap="round" stroke-linejoin="round"/>
<path d="M108.5 53.9h15.8M128.5 53.9h5.3" stroke="#2c64d8" stroke-width="1.9" stroke-linecap="round"/>
<path d="M15 94V57.5a4 4 0 0 1 4 -4h11.5a4 4 0 0 1 3.2 1.7l3.2 5.9h24.5a4 4 0 0 1 4 4V88" fill="#fff" stroke="#2c64d8" stroke-width="2.4" stroke-linejoin="round"/>
<path d="M14 86.5l7.5-15.5a7 7 0 0 1 6.5 -4.5h40.5a4.5 4.5 0 0 1 4.3 5.7l-6.5 20.3a6 6 0 0 1 -5.7 3.9H19a5 5 0 0 1 -5 -5z" fill="#2c64d8"/>
<path d="M44.2 73.5v15.2M36.5 81h15.5" stroke="#fff" stroke-width="3.3" stroke-linecap="round"/>
</svg><div class="t m" style="left:1204px;width:600px;text-align:center;top:401.80px;font-size:15px;line-height:15px;font-weight:400;color:#0b1527;letter-spacing:0.07px;">The feature list builder is empty.</div><div class="t" style="left:1204px;width:600px;text-align:center;top:422.42px;font-size:12.5px;line-height:12.5px;font-weight:400;color:#868e96;letter-spacing:0.22px;">Add features from either the feature catalog</div><div class="t" style="left:1204px;width:600px;text-align:center;top:437.82px;font-size:12.5px;line-height:12.5px;font-weight:400;color:#868e96;letter-spacing:0.22px;">or the feature list catalog.</div><div style="position:absolute;left:1664px;top:1008px;width:50px;height:50px;border-radius:25px;background:#3b7bf0;box-shadow:0 2px 6px rgba(0,0,0,0.25);z-index:8"></div><svg style="position:absolute;left:1679px;top:1021px;z-index:9" width="14" height="26" viewBox="0 0 14 26"><path d="M3.9 7.4a3.2 3.2 0 0 1 6.4 0c0 2.4-3.2 2.9-3.2 5.9v1" fill="none" stroke="#fff" stroke-width="3.3" stroke-linecap="round"/><circle cx="7.1" cy="21.5" r="2.1" fill="#fff"/></svg><div style="position:absolute;left:0;top:0;width:58px;height:1077px;background:#fff;box-shadow:1px 0 6px rgba(0,0,0,0.13);z-index:4"><svg style="position:absolute;left:0;top:0" width="50" height="45" viewBox="0 0 100 90">
<polygon fill="#e59a9a" points="26.25,43.8 43.8,43.8 35,28.1"/>
<polygon fill="#e06bc4" points="35,28.1 53.3,28.1 43.8,43.8"/>
<polygon fill="#b03ee6" points="43.8,43.8 62.6,43.8 53.3,28.1"/>
<polygon fill="#7433e8" points="53.3,28.1 71.4,28.1 62.6,43.8"/>
<polygon fill="#5a6ae0" points="62.6,43.8 80.9,43.8 71.4,28.1"/>
<polygon fill="#6aa6e0" points="71.4,28.1 89.4,28.1 80.9,43.8"/>
<polygon fill="#b03ee6" points="30.9,65.6 48.7,65.6 39.9,50.3"/>
<polygon fill="#7433e8" points="39.9,50.3 58,50.3 48.7,65.6"/>
<polygon fill="#5a6ae0" points="48.7,65.6 67.2,65.6 58,50.3"/>
<polygon fill="#6aa6e0" points="58,50.3 76.5,50.3 67.2,65.6"/>
<polygon fill="#e06bc4" points="30.9,65.8 48.7,65.8 39.4,81.6"/>
<polygon fill="#e59a9a" points="39.4,81.6 57.7,81.6 48.7,65.8"/>
</svg><svg style="position:absolute;left:17px;top:183px;" width="20" height="20" viewBox="0 0 24 24" fill="none" stroke="#474c54" stroke-width="2.4" stroke-linecap="round" stroke-linejoin="round"><path d="M6 21l6 -5l6 5"/><path d="M12 13v8"/><path d="M3.294 13.678l.166 .281c.52 .88 1.624 1.265 2.605 .91l14.242 -5.165a1.023 1.023 0 0 0 .565 -1.456l-2.62 -4.705a1.087 1.087 0 0 0 -1.447 -.42l-.056 .032l-12.694 7.618c-1.02 .613 -1.357 1.897 -.76 2.905z"/><path d="M14 5l3 5.5"/></svg><svg style="position:absolute;left:17px;top:258px" width="20" height="22" viewBox="0 0 40 44" fill="none" stroke="#474c54" stroke-width="2.5" stroke-linecap="round" stroke-linejoin="round">
<path d="M19.5 2.6C24 1.6 28.5 2.6 31.5 5.2C34.2 7.6 35.4 11 35.3 14.5C35.2 16.8 34.6 18.6 35 20L37.6 23.6C37.9 24.1 37.7 24.6 37.2 24.8L35.3 25.6V31.5C35.3 33.3 34 34.6 32.2 34.6H27.5V41H11.2V32C9.4 29.6 7.8 26.8 6.6 23.6"/>
<path d="M20.95 11.69 L23.95 11.85 L23.95 15.55 L20.95 15.71 L20.01 17.97 L22.02 20.20 L19.40 22.82 L17.17 20.81 L14.91 21.75 L14.75 24.75 L11.05 24.75 L10.89 21.75 L8.63 20.81 L6.40 22.82 L3.78 20.20 L5.79 17.97 L4.85 15.71 L1.85 15.55 L1.85 11.85 L4.85 11.69 L5.79 9.43 L3.78 7.20 L6.40 4.58 L8.63 6.59 L10.89 5.65 L11.05 2.65 L14.75 2.65 L14.91 5.65 L17.17 6.59 L19.40 4.58 L22.02 7.20 L20.01 9.43Z"/>
<circle cx="12.9" cy="13.7" r="4.3"/>
</svg><svg style="position:absolute;left:17px;top:335px;" width="20" height="20" viewBox="0 0 24 24" fill="none" stroke="#474c54" stroke-width="2.1" stroke-linecap="round" stroke-linejoin="round"><path d="M3 12h1m8 -9v1m8 8h1m-15.4 -6.4l.7 .7m12.1 -.7l-.7 .7"/><path d="M9 16a5 5 0 1 1 6 0a3.5 3.5 0 0 0 -1 3a2 2 0 0 1 -4 0a3.5 3.5 0 0 0 -1 -3"/><path d="M9.7 17l4.6 0"/></svg><div style="position:absolute;left:0px;top:385px;width:58px;height:76px;background:#e8f3fd"></div><div style="position:absolute;left:54px;top:385px;width:4px;height:76px;background:#2b64d9"></div><svg style="position:absolute;left:14.9px;top:410.75px;" width="20" height="20" viewBox="0 0 24 24" fill="none" stroke="#474c54" stroke-width="2.4" stroke-linecap="round" stroke-linejoin="round"><path d="M9 3l6 0"/><path d="M10 9l4 0"/><path d="M10 3v6l-4 11a.7 .7 0 0 0 .5 1h11a.7 .7 0 0 0 .5 -1l-4 -11v-6"/></svg><svg style="position:absolute;left:17.45px;top:487px;" width="20" height="20" viewBox="0 0 24 24" fill="none" stroke="#474c54" stroke-width="2.4" stroke-linecap="round" stroke-linejoin="round"><path d="M5 12l5 5l10 -10"/></svg><svg style="position:absolute;left:17px;top:562.7px;" width="20" height="20" viewBox="0 0 24 24" fill="none" stroke="#474c54" stroke-width="2.4" stroke-linecap="round" stroke-linejoin="round"><path d="M3 12h4l3 8l4 -16l3 8h4"/></svg><div style="position:absolute;left:0px;top:925px;width:58px;height:1px;background:#c8cdd5"></div><svg style="position:absolute;left:16.5px;top:952px;" width="20" height="20" viewBox="0 0 24 24" fill="none" stroke="#474c54" stroke-width="2.2" stroke-linecap="round" stroke-linejoin="round"><path d="M11.46 20.846a12 12 0 0 1 -7.96 -14.846a12 12 0 0 0 8.5 -3a12 12 0 0 0 8.5 3a12 12 0 0 1 -.09 7.06"/><path d="M15 19l2 2l4 -4"/></svg><svg style="position:absolute;left:16.9px;top:1027.7px;" width="20" height="20" viewBox="0 0 24 24" fill="none" stroke="#474c54" stroke-width="2.2" stroke-linecap="round" stroke-linejoin="round"><path d="M8 7a4 4 0 1 0 8 0a4 4 0 0 0 -8 0"/><path d="M6 21v-2a4 4 0 0 1 4 -4h1.5"/><path d="M15 18a3 3 0 1 0 6 0a3 3 0 1 0 -6 0"/><path d="M20.2 20.2l1.8 1.8"/></svg></div><div style="position:absolute;left:46px;top:16px;width:26px;height:26px;border-radius:14px;border:1px solid #c9ced6;background:#fff;z-index:10"></div><svg style="position:absolute;left:49.15px;top:18px;z-index:11" width="24" height="24" viewBox="0 0 24 24" fill="none" stroke="#808080" stroke-width="2.4" stroke-linecap="round" stroke-linejoin="round"><path d="M9 6l6 6l-6 6"/></svg><div style="position:absolute;left:58px;top:0;width:1664px;height:66px;background:#282e4a;z-index:5"><div style="position:absolute;left:8px;top:0;width:399px;height:66px;background:#1b2140"></div><div style="position:absolute;left:406.5px;top:0;width:1px;height:66px;background:#5a5e71"></div></div><div style="position:absolute;left:0;top:0;width:1722px;height:66px;z-index:6"><svg style="position:absolute;left:102px;top:19.5px;" width="24" height="24" viewBox="0 0 24 24" fill="none" stroke="#e8e8ea" stroke-width="1.8" stroke-linecap="round" stroke-linejoin="round"><path d="M3 5a1 1 0 0 1 1 -1h16a1 1 0 0 1 1 1v10a1 1 0 0 1 -1 1h-16a1 1 0 0 1 -1 -1v-10z"/><path d="M7 20h10"/><path d="M9 16v4"/><path d="M15 16v4"/></svg><div class="t" style="left:136px;top:24.65px;font-size:14px;line-height:14px;font-weight:700;color:#ffffff;letter-spacing:0.06px;">Credit Default Dataset UI tutorial</div><svg style="position:absolute;left:370.5px;top:22px;" width="18" height="18" viewBox="0 0 24 24" fill="none" stroke="#ffffff" stroke-width="2.6" stroke-linecap="round" stroke-linejoin="round"><path d="M3 12a3 3 0 1 0 6 0a3 3 0 1 0 -6 0"/><path d="M15 6a3 3 0 1 0 6 0a3 3 0 1 0 -6 0"/><path d="M15 18a3 3 0 1 0 6 0a3 3 0 1 0 -6 0"/><path d="M8.7 10.7l6.6 -3.4"/><path d="M8.7 13.3l6.6 3.4"/></svg><svg style="position:absolute;left:393.75px;top:21px;" width="20" height="20" viewBox="0 0 24 24" fill="none" stroke="#ffffff" stroke-width="2.2" stroke-linecap="round" stroke-linejoin="round"><path d="M10.325 4.317c.426 -1.756 2.924 -1.756 3.35 0a1.724 1.724 0 0 0 2.573 1.066c1.543 -.94 3.31 .826 2.37 2.37a1.724 1.724 0 0 0 1.065 2.572c1.756 .426 1.756 2.924 0 3.35a1.724 1.724 0 0 0 -1.066 2.573c.94 1.543 -.826 3.31 -2.37 2.37a1.724 1.724 0 0 0 -2.572 1.065c-.426 1.756 -2.924 1.756 -3.35 0a1.724 1.724 0 0 0 -2.573 -1.066c-1.543 .94 -3.31 -.826 -2.37 -2.37a1.724 1.724 0 0 0 -1.065 -2.572c-1.756 -.426 -1.756 -2.924 0 -3.35a1.724 1.724 0 0 0 1.066 -2.573c-.94 -1.543 .826 -3.31 2.37 -2.37c1 .608 2.296 .07 2.572 -1.065z"/><path d="M9 12a3 3 0 1 0 6 0a3 3 0 0 0 -6 0"/></svg><svg style="position:absolute;left:423.7px;top:24.2px;" width="16" height="16" viewBox="0 0 24 24" fill="none" stroke="#e8e8ea" stroke-width="2.4" stroke-linecap="round" stroke-linejoin="round"><path d="M6 9l6 6l6 -6"/></svg><svg style="position:absolute;left:1471px;top:19.8px;" width="24" height="24" viewBox="0 0 24 24" fill="none" stroke="#f2b33d" stroke-width="2" stroke-linecap="round" stroke-linejoin="round"><path d="M10 5a2 2 0 1 1 4 0a7 7 0 0 1 4 6v3a4 4 0 0 0 2 3h-16a4 4 0 0 0 2 -3v-3a7 7 0 0 1 4 -6"/><path d="M9 17v1a3 3 0 0 0 6 0v-1"/></svg><div style="position:absolute;left:1471px;top:11px;width:38px;height:20px;border-radius:10px;background:#a4211a"></div><div class="t" style="left:1190.2px;width:600px;text-align:center;top:15.21px;font-size:11.8px;line-height:11.8px;font-weight:700;color:#ffffff;letter-spacing:0.8px;">999+</div><div style="position:absolute;left:1513px;top:12px;width:40px;height:40px;border-radius:20px;background:#c5c6ca"></div><div class="t" style="left:1233px;width:600px;text-align:center;top:23.88px;font-size:15.5px;line-height:15.5px;font-weight:700;color:#111111;letter-spacing:0px;">XC</div><div class="t" style="left:1569.5px;top:24.65px;font-size:14px;line-height:14px;font-weight:700;color:#ffffff;letter-spacing:0px;">Xavier Conort</div><svg style="position:absolute;left:1677.7px;top:24.2px;" width="16" height="16" viewBox="0 0 24 24" fill="none" stroke="#e8e8ea" stroke-width="2.4" stroke-linecap="round" stroke-linejoin="round"><path d="M6 9l6 6l6 -6"/></svg></div>
</div></body></html>
